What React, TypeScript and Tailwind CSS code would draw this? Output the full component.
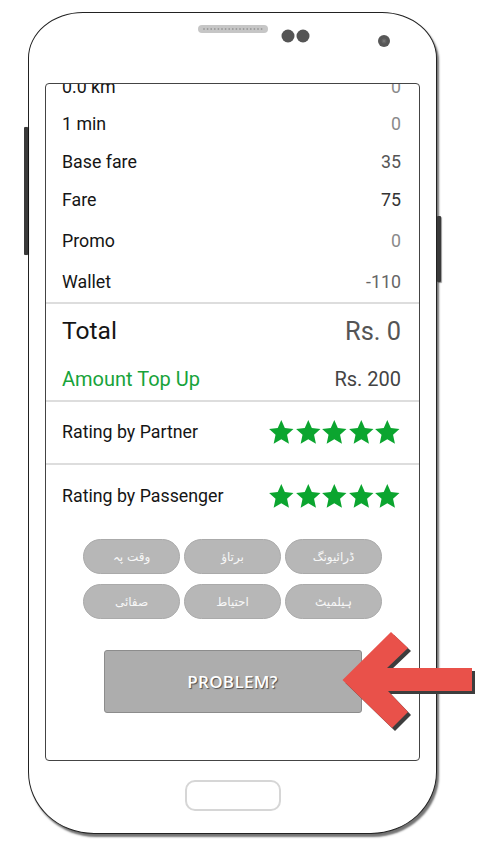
import React from "react";

const Star = () => (
  <svg width="26.6" height="26.6" viewBox="0 0 24 24">
    <polygon
      points="12,1 15.2,8.2 23,9 17.2,14.3 18.9,22.3 12,18.2 5.1,22.3 6.8,14.3 1,9 8.8,8.2"
      fill="#0ba52f"
    />
  </svg>
);

const Stars = () => (
  <div className="flex">
    <Star />
    <Star />
    <Star />
    <Star />
    <Star />
  </div>
);

const Row = ({
  label,
  value,
  h,
  vc,
}: {
  label: string;
  value: string;
  h: string;
  vc: string;
}) => (
  <div className={`flex items-center justify-between pl-[16px] pr-[18px] ${h}`}>
    <span className="text-[17.8px] text-[#151515]">{label}</span>
    <span className={`text-[17.8px] ${vc}`}>{value}</span>
  </div>
);

const Divider = () => <div className="h-[2px] bg-[#dddddd]" />;

const Tag = ({ t }: { t: string }) => (
  <div
    className="h-[35px] rounded-full bg-[#b7b7b7] border border-[#aaaaaa] flex items-center justify-center text-[12px] text-[#f7f7f7]"
    style={{ fontFamily: '"DejaVu Sans", sans-serif' }}
    dir="rtl"
  >
    {t}
  </div>
);

export default function App() {
  return (
    <div
      className="w-[492px] h-[859px] bg-white relative overflow-hidden"
      style={{ fontFamily: 'Roboto, "Liberation Sans", sans-serif' }}
    >
      <div className="relative ml-[28px] mt-[12px] w-[409px] h-[822px] bg-white border border-[#222] rounded-[55px_55px_66px_66px/46px_46px_62px_62px] shadow-[2px_3px_2px_rgba(0,0,0,0.55)] flex flex-col px-[16px]">
        {/* side buttons */}
        <div className="absolute left-[-5px] top-[114px] w-[4px] h-[128px] bg-[#3a3a3a] rounded-[1px] shadow-[1px_0_1px_rgba(0,0,0,0.4)]" />
        <div className="absolute right-[-5px] top-[203px] w-[4px] h-[66px] bg-[#3a3a3a] rounded-[1px] shadow-[1px_1px_1px_rgba(0,0,0,0.4)]" />

        {/* top bezel */}
        <div className="h-[70px] relative">
          <svg className="absolute left-[-16px] top-0" width="407" height="70" viewBox="0 0 407 70">
            <rect x="169" y="12" width="70" height="8" rx="4" fill="#c6c6c6" />
            {Array.from({ length: 17 }).map((_, i) => (
              <circle key={i} cx={175 + i * 3.6} cy="16" r="0.9" fill="#9a9a9a" />
            ))}
            <circle cx="259" cy="23" r="6.5" fill="#555" />
            <circle cx="274" cy="23" r="6.5" fill="#555" />
            <circle cx="355" cy="28" r="6" fill="#575757" />
            <circle cx="355" cy="28" r="2.5" fill="#666" />
            <circle cx="355" cy="28" r="0.8" fill="#888" />
          </svg>
        </div>

        {/* screen */}
        <div className="h-[678px] border border-[#444] rounded-[4px] overflow-hidden flex flex-col">
          <div className="mt-[-16px] flex flex-col">
            <Row label="0.0 km" value="0" h="h-[38px]" vc="text-[#8a8a8a]" />
            <Row label="1 min" value="0" h="h-[37px]" vc="text-[#8a8a8a]" />
            <Row label="Base fare" value="35" h="h-[38px]" vc="text-[#555]" />
            <Row label="Fare" value="75" h="h-[38px]" vc="text-[#333]" />
            <Row label="Promo" value="0" h="h-[44px]" vc="text-[#8a8a8a]" />
            <Row label="Wallet" value="-110" h="h-[39px]" vc="text-[#666]" />
          </div>
          <Divider />
          <div className="h-[54px] flex items-center justify-between pl-[16px] pr-[18px]">
            <span className="text-[24.6px] text-[#151515]">Total</span>
            <span className="text-[25.4px] text-[#555]">Rs. 0</span>
          </div>
          <div className="h-[42px] flex items-center justify-between pl-[16px] pr-[18px]">
            <span className="text-[20px] text-[#17a33a]">Amount Top Up</span>
            <span className="text-[20px] text-[#444]">Rs. 200</span>
          </div>
          <Divider />
          <div className="h-[61px] flex items-center justify-between pl-[16px] pr-[18px]">
            <span className="text-[17.8px] text-[#151515]">Rating by Partner</span>
            <Stars />
          </div>
          <Divider />
          <div className="h-[62px] flex items-center justify-between pl-[16px] pr-[18px]">
            <span className="text-[17.8px] text-[#151515]">Rating by Passenger</span>
            <Stars />
          </div>
          <div className="mt-[12px] mx-auto w-[299px] grid grid-cols-3 gap-x-[4px] gap-y-[10px]">
            <Tag t="وقت پہ" />
            <Tag t="برتاؤ" />
            <Tag t="ڈرائیونگ" />
            <Tag t="صفائی" />
            <Tag t="احتیاط" />
            <Tag t="ہیلمیٹ" />
          </div>
          <div className="mt-[31px] mx-auto w-[258px] h-[63px] bg-[#adadad] border border-[#8c8c8c] rounded-[3px] flex items-center justify-center">
            <span
              className="text-[17px] font-semibold text-white tracking-[0.3px] [text-shadow:1px_1px_1px_rgba(0,0,0,0.55)]"
              style={{ fontFamily: '"Open Sans", sans-serif' }}
            >
              PROBLEM?
            </span>
          </div>
        </div>

        {/* bottom bezel */}
        <div className="flex-1 flex justify-center pt-[19px]">
          <div className="w-[96px] h-[31px] rounded-[10px] border-2 border-[#d6d6d6]" />
        </div>
      </div>

      {/* red arrow */}
      <svg className="absolute left-[335px] top-[625px]" width="145" height="110" viewBox="0 0 145 110">
        <polygon
          points="10.5,58 59,10 76,26 55,46 140,46 140,69 56,69 76,90 60,106"
          fill="#3d3d3d"
        />
        <polygon
          points="7.5,55 56,7 73,23 52,43 137,43 137,66 53,66 73,87 57,103"
          fill="#e9514a"
        />
      </svg>
    </div>
  );
}
